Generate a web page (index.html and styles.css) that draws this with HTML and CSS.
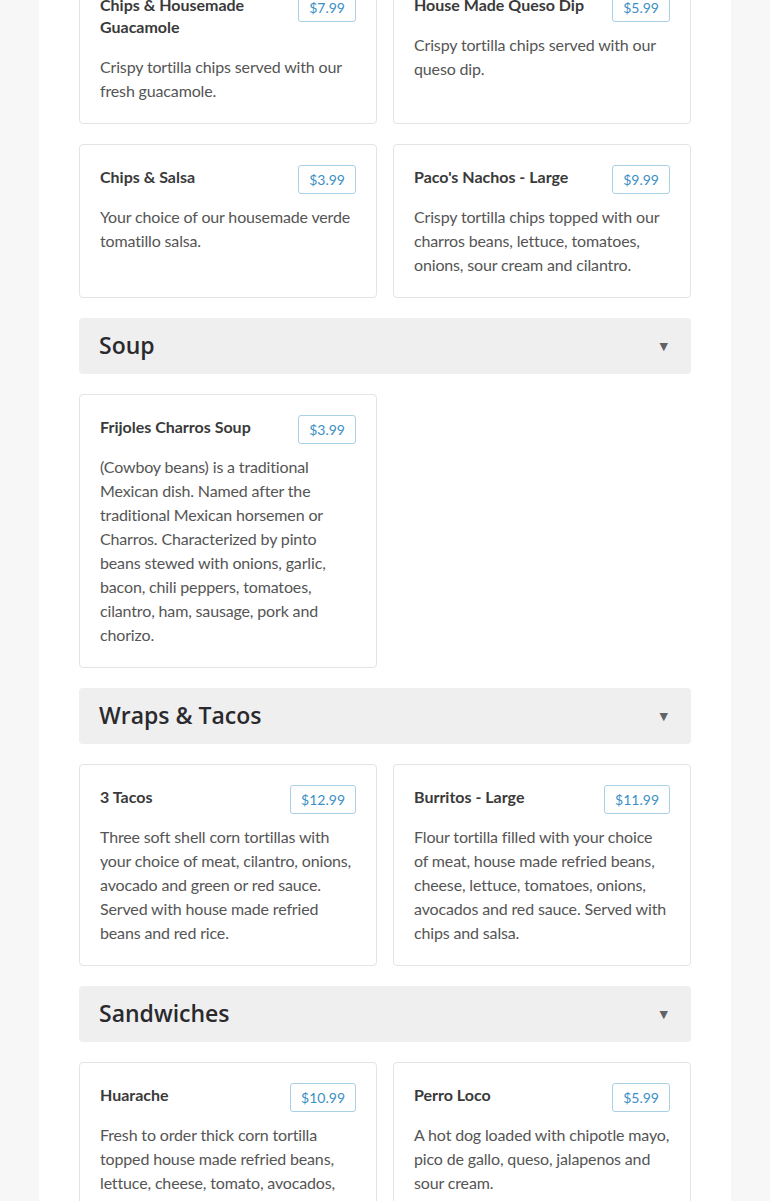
FILE: index.html
```html
<!DOCTYPE html>
<html lang="en">
<head>
<meta charset="utf-8">
<title>Menu</title>
<link rel="stylesheet" href="styles.css">
</head>
<body>
<main class="page">
  <div class="menu">
    <div class="grid">
      <article class="card">
        <div class="card-head"><h3 class="item-name">Chips &amp; Housemade Guacamole</h3><span class="price">$7.99</span></div>
        <p class="item-desc">Crispy tortilla chips served with our fresh guacamole.</p>
      </article>
      <article class="card">
        <div class="card-head"><h3 class="item-name">House Made Queso Dip</h3><span class="price">$5.99</span></div>
        <p class="item-desc">Crispy tortilla chips served with our queso dip.</p>
      </article>
      <article class="card">
        <div class="card-head"><h3 class="item-name">Chips &amp; Salsa</h3><span class="price">$3.99</span></div>
        <p class="item-desc">Your choice of our housemade verde tomatillo salsa.</p>
      </article>
      <article class="card">
        <div class="card-head"><h3 class="item-name">Paco's Nachos - Large</h3><span class="price">$9.99</span></div>
        <p class="item-desc">Crispy tortilla chips topped with our charros beans, lettuce, tomatoes, onions, sour cream and cilantro.</p>
      </article>
    </div>

    <div class="section-head"><h2 class="section-title">Soup</h2><span class="caret">▼</span></div>
    <div class="grid">
      <article class="card">
        <div class="card-head"><h3 class="item-name">Frijoles Charros Soup</h3><span class="price">$3.99</span></div>
        <p class="item-desc">(Cowboy beans) is a traditional Mexican dish. Named after the traditional Mexican horsemen or Charros. Characterized by pinto beans stewed with onions, garlic, bacon, chili peppers, tomatoes, cilantro, ham, sausage, pork and chorizo.</p>
      </article>
    </div>

    <div class="section-head"><h2 class="section-title">Wraps &amp; Tacos</h2><span class="caret">▼</span></div>
    <div class="grid">
      <article class="card">
        <div class="card-head"><h3 class="item-name">3 Tacos</h3><span class="price">$12.99</span></div>
        <p class="item-desc">Three soft shell corn tortillas with your choice of meat, cilantro, onions, avocado and green or red sauce. Served with house made refried beans and red rice.</p>
      </article>
      <article class="card">
        <div class="card-head"><h3 class="item-name">Burritos - Large</h3><span class="price">$11.99</span></div>
        <p class="item-desc">Flour tortilla filled with your choice of meat, house made refried beans, cheese, lettuce, tomatoes, onions, avocados and red sauce. Served with chips and salsa.</p>
      </article>
    </div>

    <div class="section-head"><h2 class="section-title">Sandwiches</h2><span class="caret">▼</span></div>
    <div class="grid">
      <article class="card">
        <div class="card-head"><h3 class="item-name">Huarache</h3><span class="price">$10.99</span></div>
        <p class="item-desc">Fresh to order thick corn tortilla topped house made refried beans, lettuce, cheese, tomato, avocados, sour cream and your choice of meat.</p>
      </article>
      <article class="card">
        <div class="card-head"><h3 class="item-name">Perro Loco</h3><span class="price">$5.99</span></div>
        <p class="item-desc">A hot dog loaded with chipotle mayo, pico de gallo, queso, jalapenos and sour cream.</p>
      </article>
    </div>
  </div>
</main>
</body>
</html>
```

FILE: styles.css
```css
* { box-sizing: border-box; }

html, body {
  margin: 0;
  padding: 0;
}

body {
  background: #f7f7f7;
  font-family: Lato, "Liberation Sans", sans-serif;
  color: #555;
}

.page {
  width: 692px;
  margin: 0 auto;
  background: #fff;
  padding: 0 40px 60px;
  min-height: 100vh;
}

.menu {
  display: flex;
  flex-direction: column;
  gap: 20px;
  margin-top: -28px;
}

.grid {
  display: grid;
  grid-template-columns: 1fr 1fr;
  gap: 20px 16px;
}

.card {
  border: 1px solid #e4e4e4;
  border-radius: 4px;
  padding: 20px;
  background: #fff;
}

.card-head {
  display: flex;
  justify-content: space-between;
  align-items: flex-start;
  gap: 14px;
}

.item-name {
  margin: 1px 0 17px;
  font-size: 16px;
  line-height: 22px;
  font-weight: 700;
  color: #3a3a3a;
}

.price {
  flex: none;
  border: 1px solid #a9d0e4;
  border-radius: 3px;
  padding: 4px 10px;
  font-size: 14px;
  line-height: 19px;
  color: #3b8fc4;
  background: #fff;
}

.item-desc {
  margin: 0;
  font-size: 16px;
  line-height: 24px;
  letter-spacing: -0.15px;
  color: #555;
}

.section-head {
  display: flex;
  align-items: center;
  justify-content: space-between;
  height: 56px;
  padding: 0 23px 3px 20px;
  background: #efefef;
  border-radius: 4px;
}

.section-title {
  margin: 0;
  font-family: "Open Sans", "Noto Sans", sans-serif;
  font-weight: 600;
  font-size: 23px;
  line-height: 32px;
  color: #2a2a2e;
}

.caret {
  margin-top: 4px;
  font-family: "DejaVu Sans", sans-serif;
  font-size: 11px;
  color: #5f6368;
}
```
